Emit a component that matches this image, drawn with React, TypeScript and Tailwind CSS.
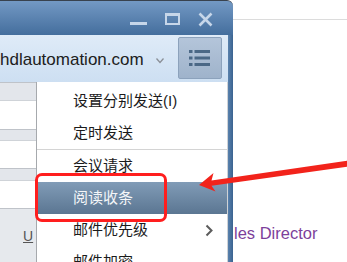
export default function App() {
  const items = [
    { t: "设置分别发送(I)", h: false, sub: false },
    { t: "定时发送", h: false, sub: false },
  ];
  const items2 = [
    { t: "会议请求", h: false, sub: false },
    { t: "阅读收条", h: true, sub: false },
    { t: "邮件优先级", h: false, sub: true },
    { t: "邮件加密", h: false, sub: false },
  ];
  const Row = ({ t, h, sub }: { t: string; h: boolean; sub: boolean }) => (
    <div
      className={
        "h-[32px] shrink-0 flex items-center pl-[36px] pr-[14px] text-[15px] leading-[20px] " +
        (h ? "bg-gradient-to-b from-[#819cb7] to-[#5b7692] text-[#f4f6f8]" : "text-[#1b1b1b]")
      }
    >
      <span className="flex-1">{t}</span>
      {sub && (
        <svg width="8" height="13" viewBox="0 0 8 13">
          <path d="M1.5 1.5 L6.5 6.5 L1.5 11.5" fill="none" stroke="#5c5c5c" strokeWidth="2" />
        </svg>
      )}
    </div>
  );
  return (
    <div className="relative w-[347px] h-[262px] overflow-hidden bg-white flex font-['Liberation_Sans','Noto_Sans_CJK_SC',sans-serif]">
      {/* window */}
      <div className="w-[233px] h-full flex flex-col shrink-0">
        {/* title bar */}
        <div className="h-[35px] shrink-0 border-t border-[#38424e] rounded-tr-[6px] bg-gradient-to-b from-[#7399c4] to-[#446e9d] flex items-start">
          <div className="ml-[130px] mt-[21px] w-[17px] h-[3px] bg-[#c6d6e9]" />
          <div className="ml-[18px] mt-[12px] w-[15px] h-[12px] border-2 border-t-[3px] border-[#c6d6e9]" />
          <svg width="15" height="15" viewBox="0 0 15 15" className="ml-[18px] mt-[11px]">
            <path d="M1.5 1.5 L13.5 13.5 M13.5 1.5 L1.5 13.5" stroke="#c6d6e9" strokeWidth="2.6" />
          </svg>
        </div>
        <div className="flex-1 flex">
          <div className="w-[228px] flex flex-col">
            {/* toolbar */}
            <div className="h-[47px] shrink-0 bg-gradient-to-b from-[#dfebf8] to-[#cddff2] flex items-start">
              <span className="w-[156px] mt-[15px] text-[17px] leading-[20px] text-[#202020] whitespace-nowrap">
                hdlautomation.com
              </span>
              <svg width="8" height="6" viewBox="0 0 8 6" className="mt-[23px]">
                <path d="M0.5 0.5 L4 4.5 L7.5 0.5" fill="none" stroke="#8a8f96" strokeWidth="1.3" />
              </svg>
              <div className="ml-[14px] mt-[2px] w-[44px] h-[42px] rounded-[2px] border border-[#8ca2bc] bg-gradient-to-b from-[#b4c5da] to-[#9fb3cb] flex items-center justify-center">
                <svg width="22" height="18" viewBox="0 0 22 18">
                  <g fill="#4b6886">
                    <rect x="0" y="1" width="3.5" height="3" />
                    <rect x="5.5" y="1" width="15.5" height="3" />
                    <rect x="0" y="7.5" width="3.5" height="3" />
                    <rect x="5.5" y="7.5" width="15.5" height="3" />
                    <rect x="0" y="14" width="3.5" height="3" />
                    <rect x="5.5" y="14" width="15.5" height="3" />
                  </g>
                </svg>
              </div>
            </div>
            {/* content */}
            <div className="flex-1 flex">
              <div className="w-[36px] shrink-0 flex flex-col">
                <div className="h-[18px] shrink-0 bg-[#e3e6eb] border-t border-[#bfc3c9]" />
                <div className="h-[29px] shrink-0 bg-white border-t border-[#cfd3d8]" />
                <div className="h-[11px] shrink-0 bg-[#e3e6eb] border-t border-[#bfc3c9]" />
                <div className="h-[28px] shrink-0 bg-white border-t border-[#cfd3d8]" />
                <div className="h-[12px] shrink-0 bg-[#e3e6eb] border-t border-[#bfc3c9]" />
                <div className="h-[28px] shrink-0 bg-white border-t border-[#cfd3d8]" />
                <div className="flex-1 bg-[#e6e9ed] border-t border-[#bfc3c9] pl-[23px] pt-[15px]">
                  <span className="text-[14px] leading-[14px] text-[#555] underline">U</span>
                </div>
              </div>
              <div className="flex-1 bg-white border-l border-[#a6a9ad] border-r border-r-[#cfd2d6] pt-[3px] flex flex-col overflow-hidden">
                {items.map((it) => (
                  <Row key={it.t} {...it} />
                ))}
                <div className="h-[1px] shrink-0 bg-[#d4d4d4]" />
                {items2.map((it) => (
                  <Row key={it.t} {...it} />
                ))}
              </div>
            </div>
          </div>
          <div className="w-[5px] bg-gradient-to-r from-[#5a82ad] to-[#3a6390]" />
        </div>
      </div>
      {/* right area */}
      <div className="flex-1 flex flex-col">
        <div className="mt-[19px] h-[1px] bg-[#dcdcdc]" />
        <div className="mt-[203px] pl-[1px] text-[16.5px] leading-[20px] text-[#7d3f9b] whitespace-nowrap">
          les Director
        </div>
      </div>
      {/* red highlight box */}
      <div className="absolute left-[35px] top-[173px] w-[132px] h-[49px] border-[3px] border-[#ff1e1e] rounded-[7px]" />
      {/* red arrow */}
      <svg className="absolute left-0 top-0" width="347" height="262" viewBox="0 0 347 262">
        <polygon
          points="199,185 213.5,173 211.5,180.5 348,160.5 348,166.5 211.5,185.8 215.5,191.5"
          fill="#f2231b"
        />
      </svg>
    </div>
  );
}
